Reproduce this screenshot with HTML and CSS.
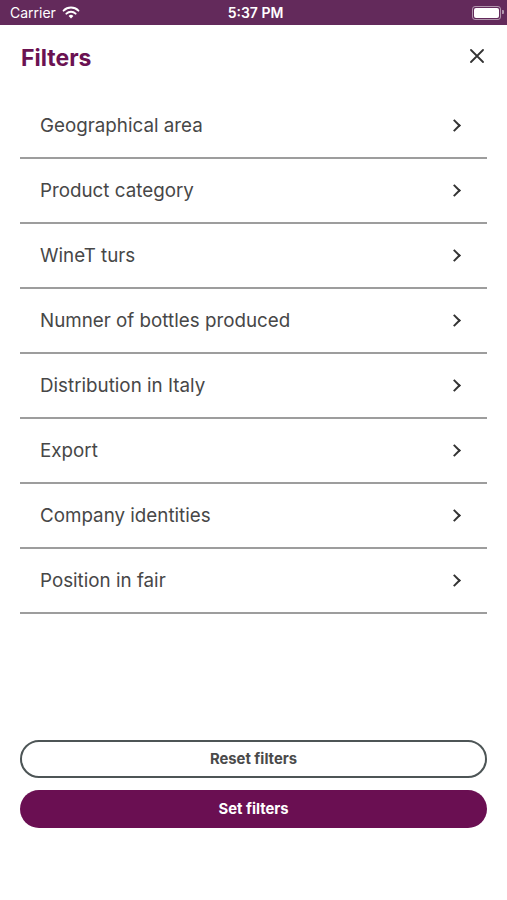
FILE: index.html
```html
<!DOCTYPE html>
<html lang="en">
<head>
    <meta charset="UTF-8">
    <meta name="viewport" content="width=device-width, initial-scale=1.0">
    <title>Filters</title>
    <link rel="stylesheet" href="styles.css">
</head>
<body>
    <div class="statusbar">
        <div class="status-left">
            <span>Carrier</span>
            <svg class="wifi" width="18" height="13" viewBox="0 0 18 13">
                <path d="M9 12.5 L6.6 9.9 A3.5 3.5 0 0 1 11.4 9.9 Z" fill="#fff"/>
                <path d="M4.4 7.6 A6.6 6.6 0 0 1 13.6 7.6" stroke="#fff" stroke-width="2" fill="none" stroke-linecap="round"/>
                <path d="M1.6 4.6 A10.6 10.6 0 0 1 16.4 4.6" stroke="#fff" stroke-width="2" fill="none" stroke-linecap="round"/>
            </svg>
        </div>
        <div class="status-time">5:37 PM</div>
        <div class="status-right">
            <div class="battery"><div class="battery-level"></div></div>
        </div>
    </div>

    <div class="page">
        <div class="header">
            <h1>Filters</h1>
            <svg class="close" width="14" height="14" viewBox="0 0 14 14">
                <path d="M1 1 L13 13 M13 1 L1 13" stroke="#333" stroke-width="1.8" stroke-linecap="round"/>
            </svg>
        </div>

        <ul class="filter-list">
            <li>Geographical area <span class="chevron"></span></li>
            <li>Product category <span class="chevron"></span></li>
            <li>WineT turs <span class="chevron"></span></li>
            <li>Numner of bottles produced <span class="chevron"></span></li>
            <li>Distribution in Italy <span class="chevron"></span></li>
            <li>Export <span class="chevron"></span></li>
            <li>Company identities <span class="chevron"></span></li>
            <li>Position in fair <span class="chevron"></span></li>
        </ul>

        <div class="actions">
            <button class="btn btn-outline">Reset filters</button>
            <button class="btn btn-primary">Set filters</button>
        </div>
    </div>
</body>
</html>
```

FILE: styles.css
```css
body {
    font-family: Inter, "Noto Sans", sans-serif;
    margin: 0;
    padding: 0;
    background-color: #fff;
    color: #444;
}
.statusbar {
    height: 25px;
    background-color: #632a5b;
    color: #fff;
    display: flex;
    align-items: center;
    justify-content: space-between;
    padding: 0 6px 0 10px;
    font-size: 14px;
    box-sizing: border-box;
}
.status-left {
    display: flex;
    align-items: center;
    gap: 6px;
    width: 120px;
}
.status-time {
    font-weight: 600;
}
.status-right {
    width: 120px;
    display: flex;
    justify-content: flex-end;
}
.battery {
    width: 25px;
    height: 10px;
    border: 1px solid rgba(255, 255, 255, 0.5);
    border-radius: 3px;
    padding: 1px;
    position: relative;
}
.battery::after {
    content: "";
    position: absolute;
    right: -4px;
    top: 3px;
    width: 2px;
    height: 4px;
    border-radius: 0 1px 1px 0;
    background-color: rgba(255, 255, 255, 0.5);
}
.battery-level {
    width: 100%;
    height: 100%;
    background-color: #fff;
    border-radius: 2px;
}
.page {
    display: flex;
    flex-direction: column;
    min-height: 875px;
    padding: 0 20px 72px 20px;
    box-sizing: border-box;
}
.header {
    height: 69px;
    display: flex;
    align-items: center;
    justify-content: space-between;
    padding: 0 3px 0 1px;
}
.header h1 {
    margin: 0;
    font-size: 23px;
    font-weight: 700;
    color: #6b1252;
    margin-top: -4px;
}
.close {
    margin-top: -8px;
}
.filter-list {
    list-style: none;
    margin: 0;
    padding: 0;
}
.filter-list li {
    height: 63px;
    display: flex;
    align-items: center;
    justify-content: space-between;
    padding: 0 28px 0 20px;
    border-bottom: 2px solid #9d9d9d;
    font-size: 18.8px;
    color: #474747;
}
.chevron {
    width: 7px;
    height: 7px;
    border-top: 2px solid #333;
    border-right: 2px solid #333;
    transform: rotate(45deg);
}
.actions {
    margin-top: auto;
    display: flex;
    flex-direction: column;
    gap: 12px;
}
.btn {
    height: 38px;
    border-radius: 19px;
    font-family: Inter, "Noto Sans", sans-serif;
    font-size: 14.8px;
    font-weight: 700;
    cursor: pointer;
}
.btn-outline {
    background-color: #fff;
    border: 2px solid #4d5556;
    color: #4a4a4a;
}
.btn-primary {
    background-color: #6a0f52;
    border: none;
    color: #fff;
}
```
